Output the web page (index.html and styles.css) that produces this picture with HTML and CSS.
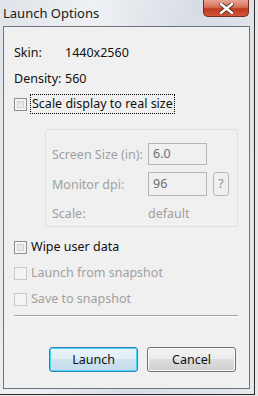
FILE: index.html
```html
<!DOCTYPE html>
<html lang="en">
<head>
  <meta charset="UTF-8">
  <title>Launch Options</title>
  <meta name="viewport" content="width=device-width, initial-scale=1.0">
  <link rel="stylesheet" href="styles.css">
</head>
<body>
  <div class="window">
    <div class="titlebar">
      <span class="title">Launch Options</span>
      <button class="close">
        <svg width="15" height="11" viewBox="0 0 15 11">
          <path d="M2 1 L13 10 M13 1 L2 10" stroke="#4a3030" stroke-width="4.2" stroke-linecap="square"/>
          <path d="M2 1 L13 10 M13 1 L2 10" stroke="#fff" stroke-width="2.4" stroke-linecap="square"/>
        </svg>
      </button>
    </div>

    <div class="client">
      <div class="info">
        <span>Skin:</span><span>1440x2560</span>
        <span>Density:</span><span>560</span>
      </div>

      <label class="check first">
        <span class="box"></span>
        <span class="focus">Scale display to real size</span>
      </label>

      <div class="group">
        <span>Screen Size (in):</span>
        <span class="field">6.0</span>
        <span></span>
        <span>Monitor dpi:</span>
        <span class="field tall">96</span>
        <span class="help">?</span>
        <span>Scale:</span>
        <span>default</span>
        <span></span>
      </div>

      <label class="check wipe">
        <span class="box"></span>
        <span>Wipe user data</span>
      </label>
      <label class="check disabled">
        <span class="box"></span>
        <span>Launch from snapshot</span>
      </label>
      <label class="check disabled">
        <span class="box"></span>
        <span>Save to snapshot</span>
      </label>

      <div class="separator"></div>

      <div class="buttons">
        <button class="btn default">Launch</button>
        <button class="btn">Cancel</button>
      </div>
    </div>
  </div>
</body>
</html>
```

FILE: styles.css
```css
* {
  box-sizing: border-box;
}

body {
  margin: 0;
  width: 258px;
  height: 396px;
  background: #e8e8e8;
  font-family: 'Noto Sans', 'Liberation Sans', sans-serif;
  font-size: 12.5px;
  color: #111;
  overflow: hidden;
}

.window {
  width: 255px;
  height: 395px;
  background: linear-gradient(100deg, #dfe4ea 0%, #eef1f4 30%, #d8dde5 60%, #e4e8ee 100%);
  border-right: 1px solid #2c2c2c;
  border-bottom: 1px solid #2c2c2c;
}

.titlebar {
  height: 26px;
  display: flex;
  justify-content: space-between;
  align-items: flex-start;
}

.title {
  margin: 4px 0 0 3px;
  font-size: 13px;
  color: #1a1a1a;
}

.close {
  width: 46px;
  height: 17px;
  margin-right: 5px;
  padding: 0;
  display: flex;
  align-items: center;
  justify-content: center;
  border: 1px solid #7a2a1e;
  border-top: none;
  border-radius: 0 0 5px 5px;
  background: linear-gradient(#e8a494 0%, #d7705a 45%, #c0391e 55%, #d0563a 100%);
}

.client {
  width: 247px;
  height: 363px;
  margin-left: 3px;
  border: 1px solid #6f7479;
  background: #f0f0f0;
  padding: 0 0 0 10px;
  display: flex;
  flex-direction: column;
}

.info {
  display: grid;
  grid-template-columns: 51px auto;
  row-gap: 9px;
  margin-top: 17px;
  line-height: 17px;
}

.check {
  display: flex;
  align-items: center;
  height: 18px;
  line-height: 16px;
}

.check .box {
  width: 13px;
  height: 13px;
  margin-right: 4px;
  border: 1px solid #8e8f8f;
  background: linear-gradient(135deg, #dcdcdc, #f6f6f6);
  box-shadow: inset 0 0 0 2px #f4f4f4, inset 0 0 0 3px #d2d2d2;
}

.check.first {
  margin-top: 8px;
}

.focus {
  outline: 1px dotted #000;
  padding: 0 1px;
  height: 18px;
  line-height: 18px;
}

.group {
  margin: 16px 0 0 31px;
  width: 193px;
  height: 98px;
  border: 1px solid #dcdfe4;
  border-radius: 3px;
  padding: 13px 0 0 6px;
  display: grid;
  grid-template-columns: 92px 59px 22px;
  column-gap: 4px;
  grid-template-rows: 22px 24px 20px;
  row-gap: 7px;
  align-items: center;
  color: #a0a0a0;
  white-space: nowrap;
}

.field {
  height: 22px;
  border: 1px solid #b6b6b6;
  padding-left: 4px;
  line-height: 20px;
  color: #6d6d78;
  background: #f0f0f0;
}

.field.tall {
  height: 24px;
  line-height: 22px;
}

.help {
  width: 16px;
  height: 24px;
  margin-left: 2px;
  border: 1px solid #b8b8b8;
  border-radius: 3px;
  text-align: center;
  line-height: 22px;
  color: #8a8aa0;
}

.check.wipe {
  margin-top: 11px;
}

.check.disabled {
  margin-top: 8px;
  color: #a0a0a0;
}

.check.disabled .box {
  border-color: #c8c8c8;
  background: #f4f4f4;
  box-shadow: none;
}

.separator {
  margin-top: 7px;
  width: 224px;
  border-top: 1px solid #a0a0a0;
  border-bottom: 1px solid #fff;
}

.buttons {
  display: flex;
  gap: 9px;
  margin: 30px 0 0 35px;
}

.btn {
  width: 89px;
  height: 25px;
  padding: 0;
  font-family: inherit;
  font-size: 12.5px;
  color: #111;
  border: 1px solid #707070;
  border-radius: 3px;
  background: linear-gradient(#f2f2f2 0%, #ebebeb 50%, #dddddd 50%, #cfcfcf 100%);
  box-shadow: inset 0 0 0 1px #fbfbfb;
}

.btn.default {
  border-color: #3c7fb1;
  background: linear-gradient(#eaf4fa 0%, #e0eef6 50%, #cfe3ef 50%, #c4dbea 100%);
  box-shadow: inset 0 0 0 1px #48d6f8;
}
```
